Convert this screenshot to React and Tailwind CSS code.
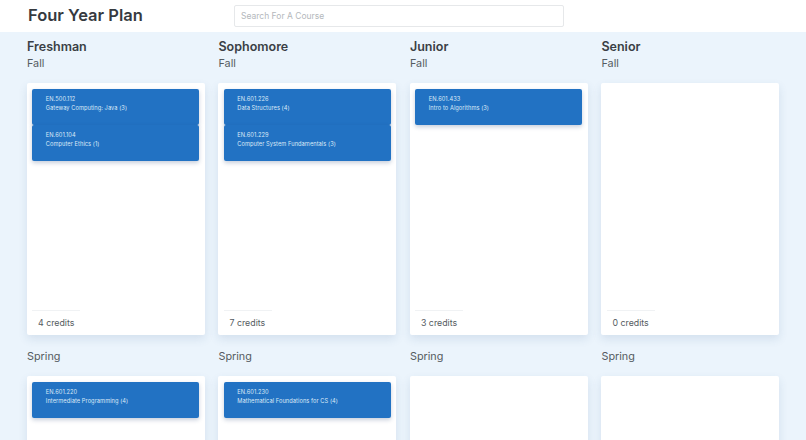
const years = [
  {
    name: 'Freshman',
    fall: [
      { code: 'EN.500.112', title: 'Gateway Computing: Java (3)' },
      { code: 'EN.601.104', title: 'Computer Ethics (1)' },
    ],
    fallCredits: 4,
    spring: [{ code: 'EN.601.220', title: 'Intermediate Programming (4)' }],
  },
  {
    name: 'Sophomore',
    fall: [
      { code: 'EN.601.226', title: 'Data Structures (4)' },
      { code: 'EN.601.229', title: 'Computer System Fundamentals (3)' },
    ],
    fallCredits: 7,
    spring: [{ code: 'EN.601.230', title: 'Mathematical Foundations for CS (4)' }],
  },
  {
    name: 'Junior',
    fall: [{ code: 'EN.601.433', title: 'Intro to Algorithms (3)' }],
    fallCredits: 3,
    spring: [],
  },
  { name: 'Senior', fall: [], fallCredits: 0, spring: [] },
];

function Course({ course }) {
  return (
    <div className="h-[36px] rounded-[2px] bg-[#2272c3] pl-[13.5px] pt-[6px] text-[5.7px] leading-[8.5px] tracking-[0.01em] text-[#dbe9f7] shadow-[0_2px_4px_rgba(30,60,110,0.25)]">
      <div>{course.code}</div>
      <div>{course.title}</div>
    </div>
  );
}

function Semester({ courses, credits }) {
  return (
    <div className="flex h-[252px] flex-col rounded-[2px] bg-white px-[5.3px] pb-[5px] pt-[6px] shadow-[0_4px_10px_rgba(40,80,130,0.12)]">
      <div className="flex-1">
        {courses.map((course) => (
          <Course key={course.code} course={course} />
        ))}
      </div>
      {credits !== undefined && (
        <>
          <div className="w-[48px] border-t border-[#f0f2f4]" />
          <div className="pb-[1px] pl-[5.7px] pt-[6px] text-[8.8px] leading-[12px] text-[#555b61]">
            {credits} credits
          </div>
        </>
      )}
    </div>
  );
}

export default function App() {
  return (
    <div className="h-[440px] overflow-hidden bg-[#ebf4fc] font-['Inter',sans-serif]">
      <header className="flex h-[32px] items-center bg-white">
        <h1 className="mb-[1px] ml-[28px] w-[206px] text-[16.5px] font-semibold leading-none text-[#363a3f]">
          Four Year Plan
        </h1>
        <input
          placeholder="Search For A Course"
          className="h-[22px] w-[330px] rounded-[2px] border border-[#e6e8ea] bg-white px-[6px] text-[8.5px] placeholder:text-[#b4b8bc]"
        />
      </header>
      <main className="grid grid-cols-[repeat(4,177.7px)] gap-x-[13.8px] px-[27px] pt-[6.5px]">
        {years.map((year) => (
          <section key={year.name}>
            <h2 className="text-[12.5px] font-semibold leading-[16px] text-[#3a3f45]">{year.name}</h2>
            <p className="mt-[1.5px] text-[10.8px] leading-[16px] text-[#555b61]">Fall</p>
            <div className="mt-[11px]">
              <Semester courses={year.fall} credits={year.fallCredits} />
            </div>
            <p className="mt-[14px] text-[10.8px] leading-[16px] text-[#555b61]">Spring</p>
            <div className="mt-[11px]">
              <Semester courses={year.spring} />
            </div>
          </section>
        ))}
      </main>
    </div>
  );
}
